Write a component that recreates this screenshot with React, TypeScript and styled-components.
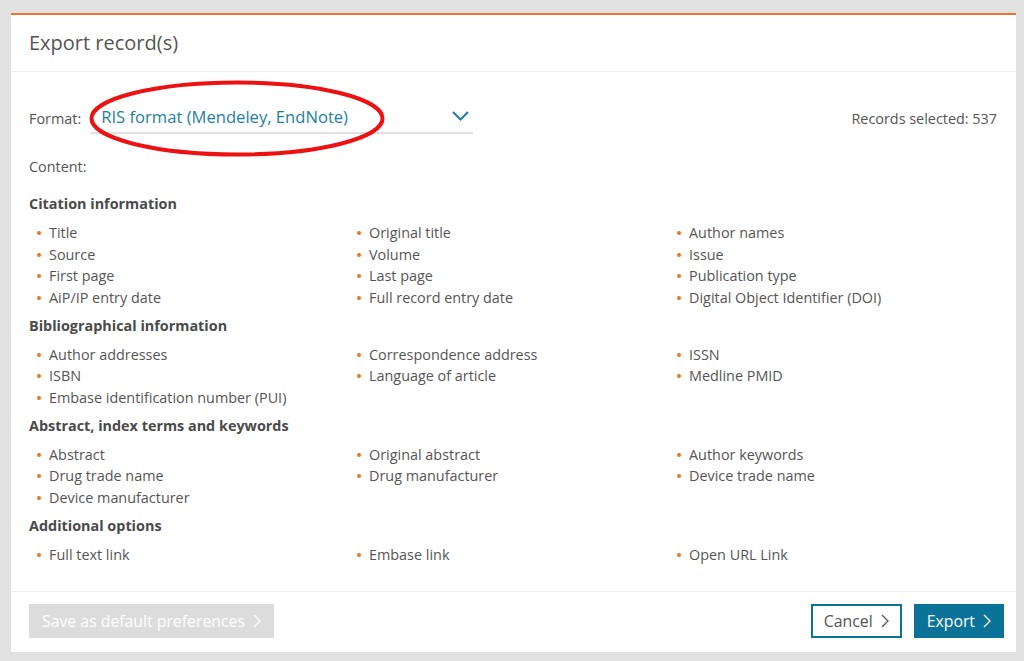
import React from "react";
import styled, { createGlobalStyle } from "styled-components";

interface Section {
  title: string;
  items: string[];
}

const sections: Section[] = [
  {
    title: "Citation information",
    items: [
      "Title",
      "Original title",
      "Author names",
      "Source",
      "Volume",
      "Issue",
      "First page",
      "Last page",
      "Publication type",
      "AiP/IP entry date",
      "Full record entry date",
      "Digital Object Identifier (DOI)",
    ],
  },
  {
    title: "Bibliographical information",
    items: [
      "Author addresses",
      "Correspondence address",
      "ISSN",
      "ISBN",
      "Language of article",
      "Medline PMID",
      "Embase identification number (PUI)",
    ],
  },
  {
    title: "Abstract, index terms and keywords",
    items: [
      "Abstract",
      "Original abstract",
      "Author keywords",
      "Drug trade name",
      "Drug manufacturer",
      "Device trade name",
      "Device manufacturer",
    ],
  },
  {
    title: "Additional options",
    items: ["Full text link", "Embase link", "Open URL Link"],
  },
];

const Chevron: React.FC<{ color: string }> = ({ color }) => (
  <svg width="8" height="14" viewBox="0 0 8 14" fill="none">
    <polyline points="1,1 7,7 1,13" stroke={color} strokeWidth="1.3" />
  </svg>
);

const App: React.FC = () => {
  return (
    <>
      <GlobalStyle />
      <Backdrop>
        <Modal>
          <Header>
            <Title>Export record(s)</Title>
          </Header>
          <Body>
            <FormatRow>
              <FormatLeft>
                <Label>Format:</Label>
                <Select>
                  <SelectText>RIS format (Mendeley, EndNote)</SelectText>
                  <svg width="17" height="10" viewBox="0 0 17 10" fill="none">
                    <polyline
                      points="1,1 8.5,8.5 16,1"
                      stroke="#1f7f9f"
                      strokeWidth="2"
                    />
                  </svg>
                </Select>
                <Annotation width="296" height="77" viewBox="0 0 296 77">
                  <ellipse
                    cx="148"
                    cy="38.5"
                    rx="145.5"
                    ry="36"
                    fill="none"
                    stroke="#ee1111"
                    strokeWidth="4"
                  />
                </Annotation>
              </FormatLeft>
              <Selected>Records selected: 537</Selected>
            </FormatRow>
            <ContentLabel>Content:</ContentLabel>
            {sections.map((section) => (
              <SectionBlock key={section.title}>
                <SectionTitle>{section.title}</SectionTitle>
                <ItemGrid>
                  {section.items.map((item) => (
                    <Item key={item}>{item}</Item>
                  ))}
                </ItemGrid>
              </SectionBlock>
            ))}
          </Body>
          <Footer>
            <Button variant="disabled">
              Save as default preferences <Chevron color="#ffffff" />
            </Button>
            <ButtonGroup>
              <Button variant="outline">
                Cancel <Chevron color="#555555" />
              </Button>
              <Button variant="primary">
                Export <Chevron color="#ffffff" />
              </Button>
            </ButtonGroup>
          </Footer>
        </Modal>
      </Backdrop>
    </>
  );
};

const GlobalStyle = createGlobalStyle`
  html, body {
    margin: 0;
    padding: 0;
    background: #e1e1e1;
    font-family: "Open Sans", "Liberation Sans", sans-serif;
  }
`;

const Backdrop = styled.div`
  height: 661px;
  box-sizing: border-box;
  padding: 13px 8px 9px 11px;
  background: #e1e1e1;
`;

const Modal = styled.div`
  height: 100%;
  box-sizing: border-box;
  background: #ffffff;
  border-top: 2px solid #e8782f;
  display: flex;
  flex-direction: column;
`;

const Header = styled.div`
  height: 57px;
  box-sizing: border-box;
  display: flex;
  align-items: center;
  padding: 0 18px 1px;
  border-bottom: 1px solid #efefef;
`;

const Title = styled.h1`
  margin: 0;
  font-size: 20px;
  font-weight: 400;
  color: #555555;
`;

const Body = styled.div`
  flex: 1;
  padding: 28px 19px 0 18px;
  color: #555555;
  font-size: 14.4px;
`;

const FormatRow = styled.div`
  display: flex;
  align-items: center;
  justify-content: space-between;
`;

const FormatLeft = styled.div`
  position: relative;
  display: flex;
  align-items: center;
  gap: 10px;
`;

const Label = styled.span`
  font-size: 14.4px;
  color: #555555;
  padding-top: 3px;
`;

const Select = styled.div`
  width: 382px;
  height: 34px;
  box-sizing: border-box;
  display: flex;
  align-items: center;
  justify-content: space-between;
  padding: 0 4px 0 10px;
  border-bottom: 2px solid #e0e0e0;
`;

const SelectText = styled.span`
  font-size: 16.6px;
  color: #1f7f9f;
`;

const Annotation = styled.svg`
  position: absolute;
  left: 60px;
  top: -20px;
  pointer-events: none;
`;

const Selected = styled.span`
  font-size: 14.4px;
  color: #555555;
  padding-top: 3px;
`;

const ContentLabel = styled.div`
  margin: 22px 0 15px;
  line-height: 22px;
  font-size: 14.4px;
`;

const SectionBlock = styled.section`
  margin-top: 6px;
`;

const SectionTitle = styled.h3`
  margin: 0 0 7px;
  font-size: 14.4px;
  font-weight: 700;
  line-height: 22px;
  color: #4a4a4a;
`;

const ItemGrid = styled.ul`
  margin: 0;
  padding: 0;
  list-style: none;
  display: grid;
  grid-template-columns: repeat(3, 320px);
`;

const Item = styled.li`
  position: relative;
  padding-left: 20px;
  line-height: 21.65px;
  font-size: 14.4px;
  color: #555555;
  &::before {
    content: "";
    position: absolute;
    left: 8px;
    top: 9px;
    width: 4px;
    height: 4px;
    border-radius: 50%;
    background: #ea7424;
  }
`;

const Footer = styled.div`
  display: flex;
  align-items: center;
  justify-content: space-between;
  padding: 12px 12px 14px 18px;
  border-top: 1px solid #eeeeee;
`;

const ButtonGroup = styled.div`
  display: flex;
  gap: 12px;
`;

const Button = styled.button<{ variant: "disabled" | "outline" | "primary" }>`
  height: 34px;
  box-sizing: border-box;
  display: flex;
  align-items: center;
  gap: 8px;
  padding: 0 11px;
  font-family: "Open Sans", "Liberation Sans", sans-serif;
  font-size: 15.8px;
  border: 2px solid ${(p) => (p.variant === "disabled" ? "#dcdcdc" : "#0b7398")};
  background: ${(p) =>
    p.variant === "outline"
      ? "#ffffff"
      : p.variant === "primary"
      ? "#0b7398"
      : "#dcdcdc"};
  color: ${(p) => (p.variant === "outline" ? "#555555" : "#ffffff")};
  cursor: ${(p) => (p.variant === "disabled" ? "default" : "pointer")};
`;

export default App;
